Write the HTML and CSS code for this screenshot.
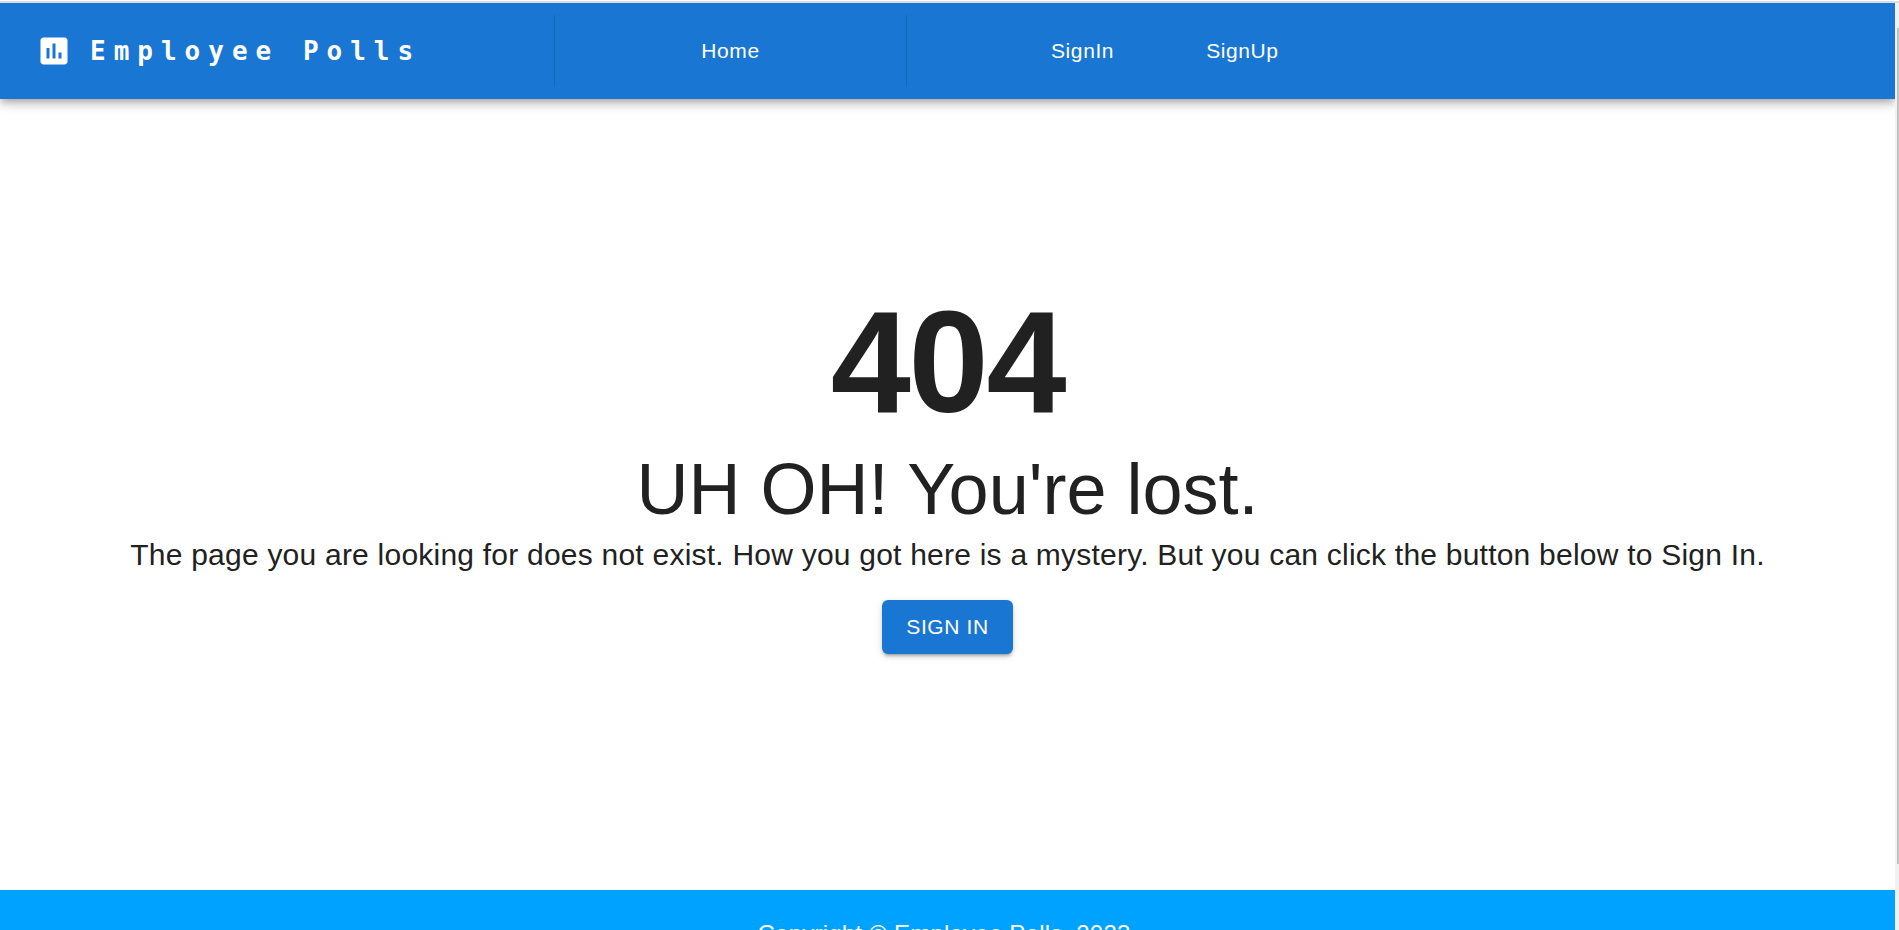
FILE: index.html
```html
<!DOCTYPE html>
<html lang="en">
<head>
<meta charset="utf-8">
<title>Employee Polls</title>
<link rel="stylesheet" href="styles.css">
</head>
<body>
<div class="page">
  <header class="app-bar">
    <a class="brand" href="#">
      <svg class="brand-icon" viewBox="0 0 24 24" aria-hidden="true"><path fill="currentColor" d="M19 3H5c-1.1 0-2 .9-2 2v14c0 1.1.9 2 2 2h14c1.1 0 2-.9 2-2V5c0-1.1-.9-2-2-2zM9 17H7v-7h2v7zm4 0h-2V7h2v10zm4 0h-2v-4h2v4z"/></svg>
      <span class="brand-name">Employee Polls</span>
    </a>
    <nav class="nav-main"><a class="nav-link" href="#">Home</a></nav>
    <nav class="nav-account">
      <a class="nav-link" href="#">SignIn</a>
      <a class="nav-link" href="#">SignUp</a>
    </nav>
  </header>
  <main class="not-found">
    <h1 class="code">404</h1>
    <h2 class="title">UH OH! You're lost.</h2>
    <p class="message">The page you are looking for does not exist. How you got here is a mystery. But you can click the button below to Sign In.</p>
    <button class="sign-in" type="button">SIGN IN</button>
  </main>
  <footer class="footer">Copyright © Employee Polls, 2023.</footer>
</div>
<div class="scroll-track" aria-hidden="true"><div class="scroll-thumb"></div></div>
</body>
</html>
```
FILE: styles.css
```css
* {
  box-sizing: border-box;
}

body {
  margin: 0;
  display: flex;
  height: 100vh;
  overflow: hidden;
  padding-top: 1px;
  background: #fff;
  color: #212121;
  font-family: "Liberation Sans", Arial, sans-serif;
}

body::before {
  content: "";
  position: absolute;
  inset: 1px 0 auto;
  height: 2px;
  background: #dadcdf;
}

.page {
  flex: 1;
  min-width: 0;
  padding-top: 2px;
  overflow: hidden;
}

.app-bar {
  display: grid;
  grid-template-columns: 518fr 353fr 952fr;
  align-items: center;
  height: 96px;
  padding: 0 36px;
  background: #1976d2;
  color: #fff;
  box-shadow: 0 3px 6px -2px rgba(0, 0, 0, 0.2), 0 6px 8px 0 rgba(0, 0, 0, 0.14), 0 2px 15px 0 rgba(0, 0, 0, 0.12);
}

.brand {
  display: flex;
  align-items: center;
  gap: 18px;
  color: inherit;
  text-decoration: none;
}

.brand-icon {
  width: 36px;
  height: 36px;
}

.brand-name {
  font: bold 26px/36px "DejaVu Sans Mono", monospace;
  letter-spacing: 8px;
  white-space: nowrap;
}

.nav-main,
.nav-account {
  display: flex;
  align-items: center;
  height: 72px;
}

.nav-main {
  justify-content: center;
  border: solid rgba(0, 0, 0, 0.12);
  border-width: 0 1px;
}

.nav-account {
  gap: 92px;
  padding-left: 144px;
}

.nav-link {
  color: inherit;
  font-size: 21px;
  line-height: 36px;
  letter-spacing: 0.02857em;
  text-decoration: none;
}

.not-found {
  display: flex;
  flex-direction: column;
  align-items: center;
  justify-content: center;
  min-height: calc(100vh - 139px);
  padding: 0 24px 56px;
  text-align: center;
}

.code,
.title,
.message {
  margin: 0;
}

.code {
  font-size: 144px;
  line-height: 168px;
  letter-spacing: -0.01562em;
}

.title {
  font-size: 72px;
  font-weight: 400;
  line-height: 84px;
}

.message {
  font-size: 30px;
  line-height: 48px;
  letter-spacing: 0.0075em;
}

.sign-in {
  margin-top: 21px;
  padding: 9px 24px;
  border: 0;
  border-radius: 6px;
  background: #1976d2;
  color: #fff;
  font: 21px/36px "Liberation Sans", Arial, sans-serif;
  letter-spacing: 0.02857em;
  box-shadow: 0 4px 2px -3px rgba(0, 0, 0, 0.2), 0 3px 3px 0 rgba(0, 0, 0, 0.14), 0 2px 8px 0 rgba(0, 0, 0, 0.12);
}

.footer {
  padding: 26px 24px;
  background: #00a2ff;
  color: #fff;
  font-size: 24px;
  line-height: 36px;
  letter-spacing: 0.00938em;
  text-align: center;
}

.scroll-track {
  width: 4px;
  margin-top: 2px;
  padding: 25px 0 66px 2px;
  background: #f1f1f1;
}

.scroll-thumb {
  height: 100%;
  background: #c1c1c1;
}
```
